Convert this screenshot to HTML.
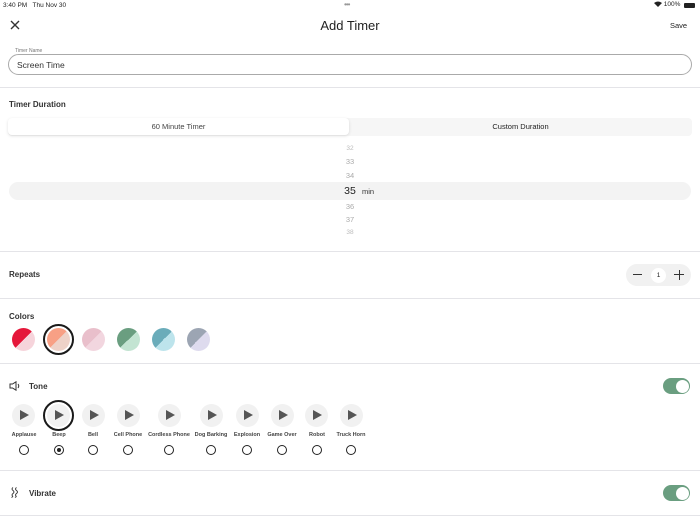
<!DOCTYPE html>
<html><head><meta charset="utf-8"><style>
*{margin:0;padding:0;box-sizing:border-box}
body{width:700px;height:525px;background:#fff;font-family:"Liberation Sans",sans-serif;color:#222;position:relative;overflow:hidden}
.a{position:absolute;white-space:nowrap}
.hr{position:absolute;left:0;width:700px;height:1px;background:#e4e4e8}
.lbl{font-size:8px;font-weight:bold;color:#333}
.sw{position:absolute;width:23px;height:23px;border-radius:50%}
.ring{position:absolute;width:31px;height:31px;border-radius:50%;border:2.5px solid #1a1a1a}
.play{position:absolute;width:23px;height:23px;border-radius:50%;background:#f1f1f1}
.play:after{content:"";position:absolute;left:8px;top:6px;border-left:9px solid #555;border-top:5.5px solid transparent;border-bottom:5.5px solid transparent}
.tl{position:absolute;font-size:5.5px;font-weight:bold;color:#444;transform:translateX(-50%);white-space:nowrap}
.rd{position:absolute;width:10px;height:10px;border-radius:50%;border:1.3px solid #222}
.tg{position:absolute;left:663px;width:27px;height:16px;border-radius:8px;background:#6a9e80}
.tg:after{content:"";position:absolute;right:1.5px;top:1.5px;width:13px;height:13px;border-radius:50%;background:#fff}
.num{position:absolute;left:0;width:700px;text-align:center;font-size:7.5px;color:#aaa}
</style></head><body>
<div class="a" style="left:3px;top:2px;font-size:6.5px">3:40 PM&nbsp;&nbsp; Thu Nov 30</div>
<div class="a" style="left:344px;top:0px;font-size:8px;color:#999;letter-spacing:-1px">•••</div>
<div class="a" style="left:654px;top:1px;font-size:6.5px">
<svg width="8" height="6" viewBox="0 0 8 6" style="vertical-align:-1px"><path d="M0 2 Q4 -1 8 2 L4 6Z" fill="#222"/></svg> 100%</div>
<div class="a" style="left:684px;top:3px;width:11px;height:5px;background:#222;border-radius:1px"></div>
<svg class="a" style="left:10px;top:20px" width="10" height="10" viewBox="0 0 10 10"><path d="M1 1L9 9M9 1L1 9" stroke="#333" stroke-width="1.4"/></svg>
<div class="a" style="left:0;width:700px;text-align:center;top:18px;font-size:13px;color:#222">Add Timer</div>
<div class="a" style="left:670px;top:21px;font-size:7.5px">Save</div>
<div class="a" style="left:15px;top:48px;font-size:5px;color:#777">Timer Name</div>
<div class="a" style="left:8px;top:54px;width:684px;height:21px;border:1px solid #aaa;border-radius:11px"></div>
<div class="a" style="left:17px;top:60px;font-size:8.5px;color:#333">Screen Time</div>
<div class="hr" style="top:87px"></div>
<div class="a lbl" style="left:9px;top:100px">Timer Duration</div>
<div class="a" style="left:8px;top:118px;width:684px;height:18px;background:#f6f6f6;border-radius:4px"></div>
<div class="a" style="left:8px;top:118px;width:341px;height:17px;background:#fff;border-radius:4px;box-shadow:0 1px 3px rgba(0,0,0,.12)"></div>
<div class="a" style="left:8px;width:341px;top:122px;text-align:center;font-size:7.5px;color:#444">60 Minute Timer</div>
<div class="a" style="left:350px;width:341px;top:122px;text-align:center;font-size:7.5px;color:#222">Custom Duration</div>
<div class="num" style="top:145px;font-size:6.5px;color:#bbb">32</div>
<div class="num" style="top:157px">33</div>
<div class="num" style="top:171px">34</div>
<div class="a" style="left:9px;top:182px;width:682px;height:18px;background:#f3f3f3;border-radius:9px"></div>
<div class="num" style="top:185px;font-size:10.5px;color:#222">35</div>
<div class="a" style="left:362px;top:187px;font-size:7.5px;color:#333">min</div>
<div class="num" style="top:202px">36</div>
<div class="num" style="top:215px">37</div>
<div class="num" style="top:229px;font-size:6.5px;color:#bbb">38</div>
<div class="hr" style="top:251px"></div>
<div class="a lbl" style="left:9px;top:270px">Repeats</div>
<div class="a" style="left:626px;top:264px;width:65px;height:22px;background:#f1f1f1;border-radius:11px"></div>
<div class="a" style="left:633px;top:274px;width:9px;height:1.3px;background:#333"></div>
<div class="a" style="left:651px;top:268px;width:15px;height:15px;background:#fff;border-radius:50%;text-align:center;font-size:6.5px;line-height:15px">1</div>
<div class="a" style="left:674px;top:274px;width:10px;height:1.3px;background:#333"></div>
<div class="a" style="left:678.5px;top:269.5px;width:1.3px;height:10px;background:#333"></div>
<div class="hr" style="top:298px"></div>
<div class="a lbl" style="left:9px;top:312px">Colors</div>
<div class="sw" style="left:12px;top:328px;background:linear-gradient(135deg,#e5173a 50%,#f6d4db 50%)"></div>
<div class="sw" style="left:47px;top:328px;background:linear-gradient(135deg,#f8a085 50%,#eed2c8 50%)"></div>
<div class="ring" style="left:43px;top:324px"></div>
<div class="sw" style="left:82px;top:328px;background:linear-gradient(135deg,#e9bfcb 50%,#f2d6df 50%)"></div>
<div class="sw" style="left:117px;top:328px;background:linear-gradient(135deg,#6a9e80 50%,#c3e4d2 50%)"></div>
<div class="sw" style="left:152px;top:328px;background:linear-gradient(135deg,#6aacba 50%,#bde4ec 50%)"></div>
<div class="sw" style="left:187px;top:328px;background:linear-gradient(135deg,#9ca5b3 50%,#dedbee 50%)"></div>
<div class="hr" style="top:363px"></div>
<svg class="a" style="left:9px;top:381px" width="12" height="10" viewBox="0 0 12 10"><path d="M1 3H3.5L7 0.8V9.2L3.5 7H1Z" fill="none" stroke="#333" stroke-width="1"/><path d="M9 3Q10.5 5 9 7" fill="none" stroke="#333" stroke-width="1"/></svg>
<div class="a lbl" style="left:29px;top:382px">Tone</div>
<div class="tg" style="top:378px"></div>
<div class="play" style="left:12px;top:404px"></div>
<div class="play" style="left:47px;top:404px"></div>
<div class="ring" style="left:43px;top:400px"></div>
<div class="play" style="left:82px;top:404px"></div>
<div class="play" style="left:117px;top:404px"></div>
<div class="play" style="left:158px;top:404px"></div>
<div class="play" style="left:200px;top:404px"></div>
<div class="play" style="left:236px;top:404px"></div>
<div class="play" style="left:271px;top:404px"></div>
<div class="play" style="left:305px;top:404px"></div>
<div class="play" style="left:340px;top:404px"></div>
<div class="tl" style="left:24px;top:432px">Applause</div>
<div class="tl" style="left:59px;top:432px">Beep</div>
<div class="tl" style="left:93px;top:432px">Bell</div>
<div class="tl" style="left:128px;top:432px">Cell Phone</div>
<div class="tl" style="left:169px;top:432px">Cordless Phone</div>
<div class="tl" style="left:211px;top:432px">Dog Barking</div>
<div class="tl" style="left:247px;top:432px">Explosion</div>
<div class="tl" style="left:282px;top:432px">Game Over</div>
<div class="tl" style="left:317px;top:432px">Robot</div>
<div class="tl" style="left:351px;top:432px">Truck Horn</div>
<div class="rd" style="left:19px;top:445px"></div>
<div class="rd" style="left:54px;top:445px"></div>
<div class="a" style="left:57px;top:448px;width:4px;height:4px;border-radius:50%;background:#222"></div>
<div class="rd" style="left:88px;top:445px"></div>
<div class="rd" style="left:123px;top:445px"></div>
<div class="rd" style="left:164px;top:445px"></div>
<div class="rd" style="left:206px;top:445px"></div>
<div class="rd" style="left:242px;top:445px"></div>
<div class="rd" style="left:277px;top:445px"></div>
<div class="rd" style="left:312px;top:445px"></div>
<div class="rd" style="left:346px;top:445px"></div>
<div class="hr" style="top:470px"></div>
<svg class="a" style="left:10px;top:487px" width="10" height="11" viewBox="0 0 10 11"><path d="M3 0.5Q1 2 3 3.5T3 6.5T3 9.5M6.5 0.5Q4.5 2 6.5 3.5T6.5 6.5T6.5 9.5M1.5 10.5L3 9.5M5 10.5L6.5 9.5" fill="none" stroke="#333" stroke-width="0.9"/></svg>
<div class="a lbl" style="left:29px;top:489px">Vibrate</div>
<div class="tg" style="top:485px"></div>
<div class="hr" style="top:515px"></div>
</body></html>
